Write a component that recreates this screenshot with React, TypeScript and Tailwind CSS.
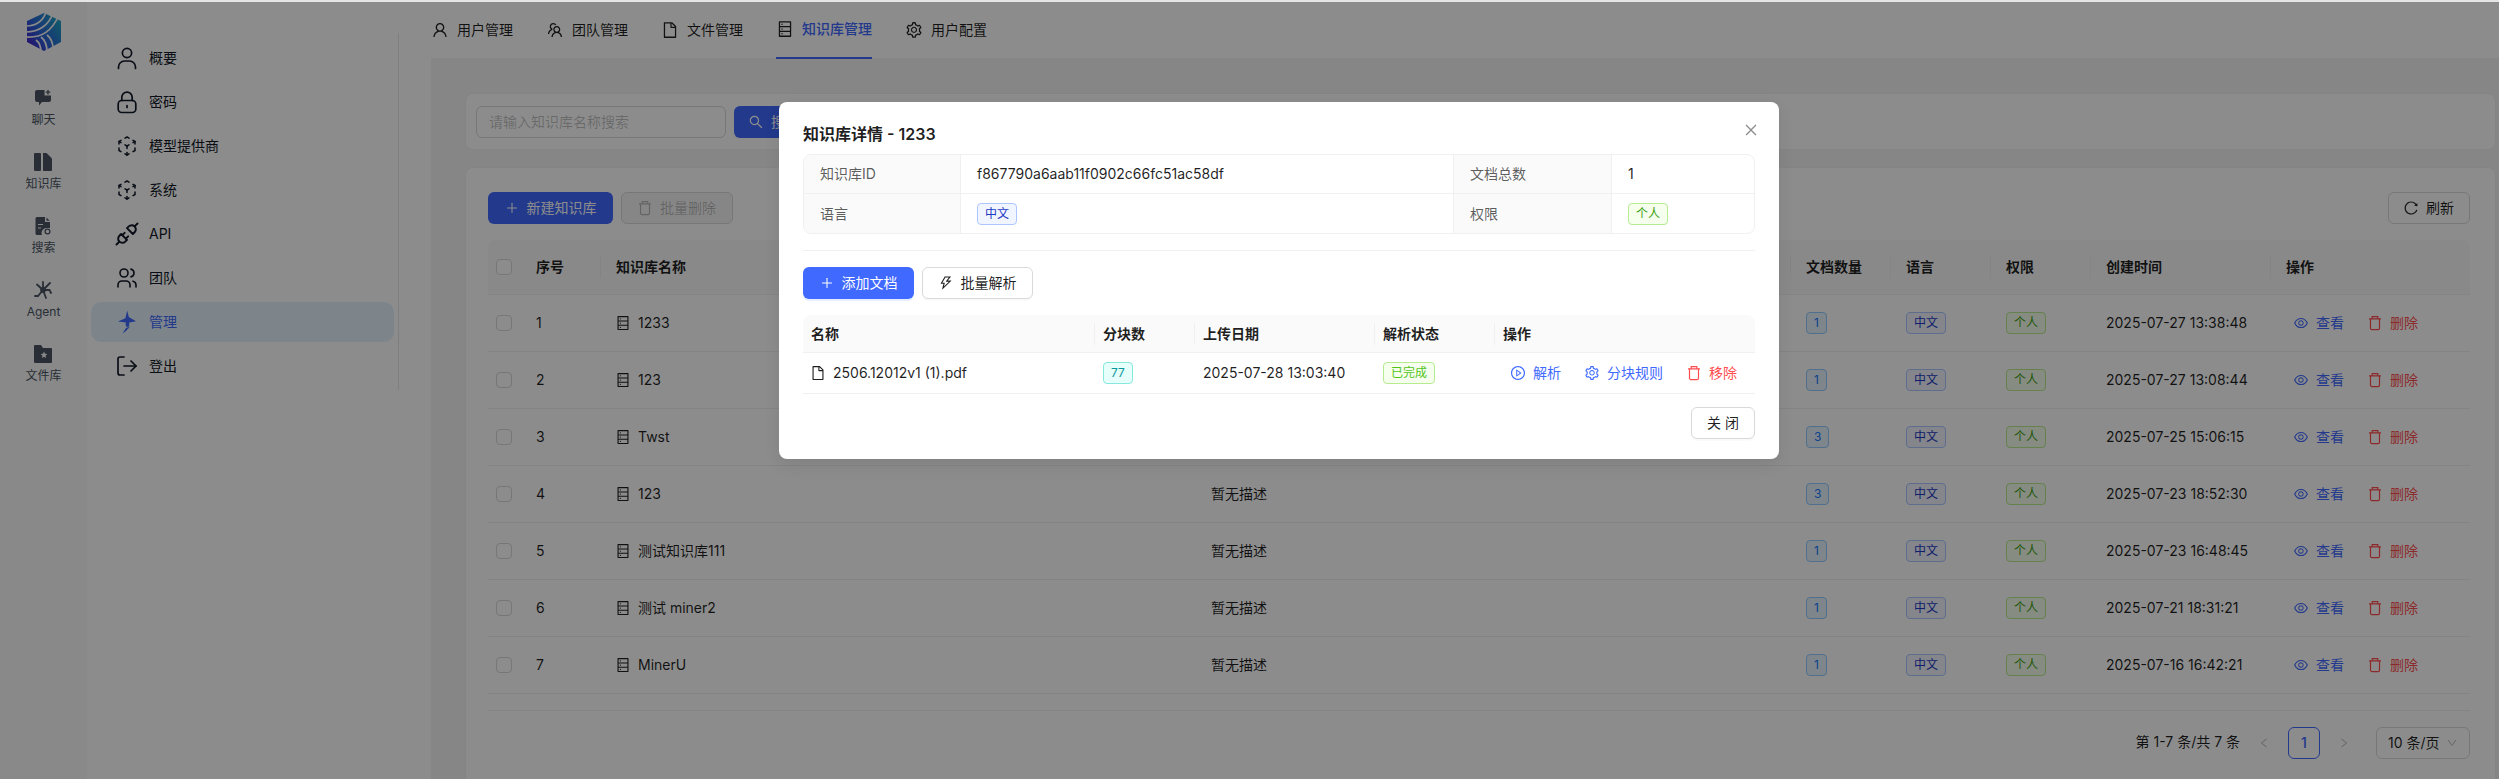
import { LogOut } from 'lucide-react'
import {
  AiOutlineUser,
  AiOutlineTeam,
  AiOutlineFile,
  AiOutlineDatabase,
  AiOutlineSetting,
  AiOutlineSearch,
  AiOutlinePlus,
  AiOutlineThunderbolt,
  AiOutlinePlayCircle,
  AiOutlineClose,
  AiOutlineReload,
  AiOutlineEye,
  AiOutlineLeft,
  AiOutlineRight,
  AiOutlineDown,
} from 'react-icons/ai'
import { TbCube3dSphere, TbPlugConnected, TbUsers } from 'react-icons/tb'

const rows = [
  { name: '1233', docs: 1, created: '2025-07-27 13:38:48' },
  { name: '123', docs: 1, created: '2025-07-27 13:08:44' },
  { name: 'Twst', docs: 3, created: '2025-07-25 15:06:15' },
  { name: '123', docs: 3, created: '2025-07-23 18:52:30' },
  { name: '测试知识库111', docs: 1, created: '2025-07-23 16:48:45' },
  { name: '测试 miner2', docs: 1, created: '2025-07-21 18:31:21' },
  { name: 'MinerU', docs: 1, created: '2025-07-16 16:42:21' },
]

const tabs = [
  { label: '用户管理', Icon: AiOutlineUser },
  { label: '团队管理', Icon: AiOutlineTeam },
  { label: '文件管理', Icon: AiOutlineFile },
  { label: '知识库管理', Icon: AiOutlineDatabase, active: true },
  { label: '用户配置', Icon: AiOutlineSetting },
]

const tableColumns = 'grid grid-cols-[32px_80px_595px_595px_100px_100px_100px_180px_200px]'
const docColumns = 'grid grid-cols-[291px_100px_180px_120px_261px]'
// antd glyphs sit inset in their box, so they get 16px inside a 14px slot
const iconSize = '-mx-px h-4 w-4'

function Logo() {
  return (
    <svg viewBox="0 0 36 40" className="h-10 w-9">
      <defs>
        <linearGradient id="logo-fill" x1="0" y1="1" x2="1" y2="0.2">
          <stop offset="0" stopColor="#4a12c4" />
          <stop offset="0.45" stopColor="#2c5fd8" />
          <stop offset="1" stopColor="#1fa6c4" />
        </linearGradient>
      </defs>
      <path d="M18 1 L35 9 V30 L18 39 L1 30 V9 Z" fill="url(#logo-fill)" />
      <g fill="none" stroke="#f9fafb" strokeWidth="1.7">
        <path d="M0 14 C10 14 17 9 20 0" />
        <path d="M0 20 C13 20 23 13 27 1" />
        <path d="M0 25 C16 26 26 19 33 3" />
        <path d="M10 28 C14 31 15 35 15 40" />
        <path d="M15 25 C19 28 21 33 21 40" />
        <path d="M21 23 C25 26 27 31 27 37" />
      </g>
    </svg>
  )
}

function TrashIcon({ className }: { className?: string }) {
  return (
    <svg viewBox="0 0 16 16" fill="none" stroke="currentColor" strokeWidth="1.2" className={className}>
      <path d="M2 3.8h12M3.5 3.8v9.4A1.4 1.4 0 0 0 4.9 14.6h6.2a1.4 1.4 0 0 0 1.4-1.4V3.8M5.2 3.8V1.6h5.6v2.2" />
    </svg>
  )
}

function ChatIcon() {
  return (
    <svg viewBox="0 0 18 18" className="h-[18px] w-[18px]" fill="currentColor">
      <path d="M3 1h7.5v5.5H17V11a2 2 0 0 1-2 2H8l-3 3.5V13H3a2 2 0 0 1-2-2V3a2 2 0 0 1 2-2z" />
      <path d="M14 1v4.5M11.8 3.2h4.4" stroke="currentColor" strokeWidth="1.3" fill="none" />
    </svg>
  )
}

function BooksIcon() {
  return (
    <svg viewBox="0 0 18 18" className="h-[18px] w-[18px]" fill="currentColor">
      <rect x="0" y="0" width="7" height="18" rx="1" />
      <path d="M9 0h3.5L18 5.5V17a1 1 0 0 1-1 1H9z" />
    </svg>
  )
}

function DocSearchIcon() {
  return (
    <svg viewBox="0 0 18 18" className="h-[18px] w-[18px]" fill="currentColor">
      <path d="M3 0h8v5h5v6h-4a5 5 0 0 0-4 7H3a1.5 1.5 0 0 1-1.5-1.5v-15A1.5 1.5 0 0 1 3 0z" />
      <path d="M12.5 0.5 15.7 3.8h-3.2z" />
      <path d="M4 7.5h5M4 11h3" stroke="#f9fafb" strokeWidth="1.2" />
      <circle cx="13.5" cy="14.5" r="2.4" fill="none" stroke="currentColor" strokeWidth="1.3" />
    </svg>
  )
}

function AgentIcon() {
  return (
    <svg viewBox="0 0 18 18" className="h-[18px] w-[18px]" fill="none" stroke="currentColor" strokeWidth="1.8" strokeLinecap="round">
      <path d="M9 9 3 3.5M9 1v8M9 9l7-7M9 9h6.5l1.5 3M9 9l-5 6H1M9 9l3 8" />
      <circle cx="9" cy="9" r="2" fill="currentColor" />
    </svg>
  )
}

function FolderStarIcon() {
  return (
    <svg viewBox="0 0 18 18" className="h-[18px] w-[18px]" fill="currentColor">
      <path d="M1 0h6l2 3h8a1 1 0 0 1 1 1v13a1 1 0 0 1-1 1H1a1 1 0 0 1-1-1V1a1 1 0 0 1 1-1z" />
      <path d="m10 6.5 1 2.2 2.4.3-1.8 1.6.5 2.4-2.1-1.2-2.1 1.2.5-2.4L6.6 9l2.4-.3z" fill="#f9fafb" />
    </svg>
  )
}

function PersonIcon() {
  return (
    <svg viewBox="0 0 24 24" className="h-6 w-6" fill="none" stroke="currentColor" strokeWidth="1.7" strokeLinecap="round">
      <circle cx="12" cy="7" r="4.6" />
      <path d="M3.5 22.5v-1.5a6 6 0 0 1 6-6h5a6 6 0 0 1 6 6v1.5" />
    </svg>
  )
}

function LockIcon() {
  return (
    <svg viewBox="0 0 24 24" className="h-6 w-6" fill="none" stroke="currentColor" strokeWidth="1.7" strokeLinecap="round">
      <rect x="3.2" y="10.5" width="17.6" height="12" rx="3.5" />
      <path d="M6.8 10.5V7.4a5.2 5.2 0 0 1 10.4 0v3.1M12 15.6v1.8" />
    </svg>
  )
}

function ManageIcon() {
  return (
    <svg viewBox="0 0 24 24" className="h-6 w-6" fill="#3f69ff">
      <path d="M12.2 0.5 13.8 7 21 11.2 14.3 12.6 14 16.5 11.5 17 10.5 14.5 11 12.6 3 11.4 10.4 8.3z" />
      <path d="M11 18 15 16.5 11 21 7.5 23.5z" />
    </svg>
  )
}

function Tag({ color, children }: { color: string; children: React.ReactNode }) {
  return (
    <span className={`inline-flex h-[22px] items-center rounded border px-[7px] text-xs leading-5 ${color}`}>
      {children}
    </span>
  )
}

const blueTag = 'border-[#91caff] bg-[#e6f4ff] text-[#1677ff]'
const indigoTag = 'border-[#adc6ff] bg-[#f0f5ff] text-[#1d39c4]'
const greenTag = 'border-[#b7eb8f] bg-[#f6ffed] text-[#389e0d]'
const successTag = 'border-[#b7eb8f] bg-[#f6ffed] text-[#52c41a]'
const cyanTag = 'border-[#87e8de] bg-[#e6fffb] text-[#08979c]'

function HeaderCell({ children, pad = 'pl-[15px]' }: { children: React.ReactNode; pad?: string }) {
  return (
    <div className="flex items-center">
      <div className={`h-[22px] w-full border-l border-[#f0f0f0] text-sm leading-[22px] font-semibold text-[#000000e0] ${pad}`}>
        {children}
      </div>
    </div>
  )
}

function Sidebar() {
  const railItems = [
    { label: '聊天', icon: <ChatIcon /> },
    { label: '知识库', icon: <BooksIcon /> },
    { label: '搜索', icon: <DocSearchIcon /> },
    { label: 'Agent', icon: <AgentIcon /> },
    { label: '文件库', icon: <FolderStarIcon /> },
  ]
  const menu = [
    { label: '概要', icon: <PersonIcon /> },
    { label: '密码', icon: <LockIcon /> },
    { label: '模型提供商', icon: <TbCube3dSphere className="h-6 w-6" strokeWidth={1.5} /> },
    { label: '系统', icon: <TbCube3dSphere className="h-6 w-6" strokeWidth={1.5} /> },
    { label: 'API', icon: <TbPlugConnected className="-mx-0.5 h-7 w-7" strokeWidth={1.7} /> },
    { label: '团队', icon: <TbUsers className="h-6 w-6" strokeWidth={1.6} /> },
    { label: '管理', icon: <ManageIcon />, active: true },
    { label: '登出', icon: <LogOut className="h-6 w-6" strokeWidth={1.7} /> },
  ]
  return (
    <>
      <aside className="flex w-[87px] shrink-0 flex-col items-center bg-[#f9fafb] pt-3">
        <Logo />
        <div className="mt-[37px] flex flex-col">
          {railItems.map((item) => (
            <div key={item.label} className="flex h-16 flex-col items-center text-[#4b5563]">
              {item.icon}
              <span className="mt-[5px] text-xs leading-4">{item.label}</span>
            </div>
          ))}
        </div>
      </aside>
      <nav className="w-[344px] shrink-0 bg-white pt-[33px]">
        <div className="flex h-[357px] w-[312px] flex-col gap-1 border-r border-[#e5e7eb] pt-[5px] pl-1">
          {menu.map((item) => (
            <div
              key={item.label}
              className={`flex h-10 w-[303px] shrink-0 items-center gap-[10px] rounded-[10px] pl-6 text-sm ${
                item.active ? 'bg-[#e3f2fd] text-[#3f69ff]' : 'text-[#111827]'
              }`}
            >
              {item.icon}
              <span>{item.label}</span>
            </div>
          ))}
        </div>
      </nav>
    </>
  )
}

function KnowledgeTable() {
  return (
    <section className="h-[640px] rounded-lg border border-[#f0f0f0] bg-white pt-6 pl-[22px]">
      <div className="flex w-[1982px] justify-between">
        <div className="flex gap-2">
          <button className="flex h-8 w-[125px] items-center justify-center gap-2 rounded-md bg-[#3f69ff] text-sm text-white">
            <AiOutlinePlus className="h-[14px] w-[14px]" />
            新建知识库
          </button>
          <button className="flex h-8 w-[112px] items-center justify-center gap-2 rounded-md border border-[#d9d9d9] bg-[#0000000a] text-sm text-[#00000040]">
            <TrashIcon className={iconSize} />
            批量删除
          </button>
        </div>
        <button className="flex h-8 w-[82px] items-center justify-center gap-2 rounded-md border border-[#d9d9d9] text-sm text-[#000000e0]">
          <AiOutlineReload className={iconSize} />
          刷新
        </button>
      </div>
      <div className="mt-4 w-[1982px]">
        <div className={`${tableColumns} h-[55px] rounded-t-lg border-b border-[#f0f0f0] bg-[#fafafa]`}>
          <div className="flex items-center pl-2">
            <span className="h-4 w-4 rounded border border-[#d9d9d9] bg-white" />
          </div>
          <div className="flex items-center pl-4 text-sm font-semibold text-[#000000e0]">序号</div>
          <HeaderCell>知识库名称</HeaderCell>
          <HeaderCell>描述</HeaderCell>
          <HeaderCell>文档数量</HeaderCell>
          <HeaderCell>语言</HeaderCell>
          <HeaderCell>权限</HeaderCell>
          <HeaderCell>创建时间</HeaderCell>
          <HeaderCell>操作</HeaderCell>
        </div>
        {rows.map((row, i) => (
          <div key={i} className={`${tableColumns} h-[57px] items-center border-b border-[#f0f0f0] text-sm text-[#000000e0]`}>
            <div className="pl-2">
              <span className="block h-4 w-4 rounded border border-[#d9d9d9] bg-white" />
            </div>
            <div className="pl-4">{i + 1}</div>
            <div className="flex items-center gap-2 pl-4">
              <AiOutlineDatabase className={iconSize} />
              {row.name}
            </div>
            <div className="pl-4">暂无描述</div>
            <div className="pl-4">
              <Tag color={blueTag}>{row.docs}</Tag>
            </div>
            <div className="pl-4">
              <Tag color={indigoTag}>中文</Tag>
            </div>
            <div className="pl-4">
              <Tag color={greenTag}>个人</Tag>
            </div>
            <div className="pl-4">{row.created}</div>
            <div className="flex gap-2 pl-4">
              <span className="flex items-center gap-2 px-2 text-[#3f69ff]">
                <AiOutlineEye className={iconSize} />
                查看
              </span>
              <span className="flex items-center gap-2 px-2 text-[#ff4d4f]">
                <TrashIcon className={iconSize} />
                删除
              </span>
            </div>
          </div>
        ))}
        <div className="h-[17px] border-b border-[#f0f0f0]" />
        <div className="mt-[16px] flex items-center justify-end gap-2 text-sm text-[#000000e0]">
          <span className="mb-[2px]">第 1-7 条/共 7 条</span>
          <span className="flex h-8 w-8 items-center justify-center text-[#00000040]">
            <AiOutlineLeft className="h-3 w-3" />
          </span>
          <span className="flex h-8 w-8 items-center justify-center rounded-md border border-[#3f69ff] font-medium text-[#3f69ff]">
            1
          </span>
          <span className="flex h-8 w-8 items-center justify-center text-[#00000040]">
            <AiOutlineRight className="h-3 w-3" />
          </span>
          <span className="ml-2 flex h-8 w-[94px] items-center justify-between rounded-md border border-[#d9d9d9] pr-[11px] pl-[11px]">
            10 条/页
            <AiOutlineDown className="h-3 w-3 text-[#00000040]" />
          </span>
        </div>
      </div>
    </section>
  )
}

function DetailModal() {
  const labelCell = 'flex items-center bg-[#fafafa] pl-4 text-sm text-[#000000a6] border-r border-[#f0f0f0]'
  const valueCell = 'flex items-center pl-4 text-sm text-[#000000e0]'
  return (
    <div className="absolute top-[102px] left-[779px] w-[1000px] rounded-lg bg-white px-6 pt-5 pb-5 shadow-[0_6px_16px_rgba(0,0,0,0.08)]">
      <button className="absolute top-[20px] right-[20px] text-[#00000073]">
        <AiOutlineClose className="h-4 w-4" />
      </button>
      <h2 className="text-base leading-6 font-semibold text-[#000000e0]">知识库详情 - 1233</h2>
      <div className="mt-2 rounded-lg border border-[#f0f0f0]">
        <div className="grid h-[39px] grid-cols-[157px_493px_158px_142px] border-b border-[#f0f0f0]">
          <div className={`${labelCell} rounded-tl-lg`}>知识库ID</div>
          <div className={`${valueCell} border-r border-[#f0f0f0]`}>f867790a6aab11f0902c66fc51ac58df</div>
          <div className={labelCell}>文档总数</div>
          <div className={valueCell}>1</div>
        </div>
        <div className="grid h-[39px] grid-cols-[157px_493px_158px_142px]">
          <div className={`${labelCell} rounded-bl-lg`}>语言</div>
          <div className={`${valueCell} border-r border-[#f0f0f0]`}>
            <Tag color={indigoTag}>中文</Tag>
          </div>
          <div className={labelCell}>权限</div>
          <div className={valueCell}>
            <Tag color={greenTag}>个人</Tag>
          </div>
        </div>
      </div>
      <div className="my-4 h-px bg-[#f0f0f0]" />
      <div className="flex gap-2">
        <button className="flex h-8 w-[111px] items-center justify-center gap-2 rounded-md bg-[#3f69ff] text-sm text-white shadow-[0_2px_0_rgba(5,95,255,0.1)]">
          <AiOutlinePlus className="h-[14px] w-[14px]" />
          添加文档
        </button>
        <button className="flex h-8 w-[111px] items-center justify-center gap-2 rounded-md border border-[#d9d9d9] bg-white text-sm text-[#000000e0] shadow-[0_2px_0_rgba(0,0,0,0.02)]">
          <AiOutlineThunderbolt className={iconSize} />
          批量解析
        </button>
      </div>
      <div className="mt-4">
        <div className={`${docColumns} h-[38px] rounded-t-lg border-b border-[#f0f0f0] bg-[#fafafa]`}>
          <div className="flex items-center pl-2 text-sm font-semibold text-[#000000e0]">名称</div>
          <HeaderCell pad="pl-2">分块数</HeaderCell>
          <HeaderCell pad="pl-2">上传日期</HeaderCell>
          <HeaderCell pad="pl-2">解析状态</HeaderCell>
          <HeaderCell pad="pl-2">操作</HeaderCell>
        </div>
        <div className={`${docColumns} h-[41px] items-center border-b border-[#f0f0f0] text-sm text-[#000000e0]`}>
          <div className="flex items-center gap-2 pl-2">
            <AiOutlineFile className={iconSize} />
            2506.12012v1 (1).pdf
          </div>
          <div className="pl-[9px]">
            <Tag color={cyanTag}>77</Tag>
          </div>
          <div className="pl-[9px]">2025-07-28 13:03:40</div>
          <div className="pl-[9px]">
            <Tag color={successTag}>已完成</Tag>
          </div>
          <div className="flex gap-2 pl-[9px]">
            <span className="flex items-center gap-2 px-2 text-[#3f69ff]">
              <AiOutlinePlayCircle className={iconSize} />
              解析
            </span>
            <span className="flex items-center gap-2 px-2 text-[#3f69ff]">
              <AiOutlineSetting className={iconSize} />
              分块规则
            </span>
            <span className="flex items-center gap-2 px-2 text-[#ff4d4f]">
              <TrashIcon className={iconSize} />
              移除
            </span>
          </div>
        </div>
      </div>
      <div className="mt-[13px] flex justify-end">
        <button className="h-8 w-16 rounded-md border border-[#d9d9d9] bg-white text-sm text-[#000000e0] shadow-[0_2px_0_rgba(0,0,0,0.02)]">
          关 闭
        </button>
      </div>
    </div>
  )
}

export default function App() {
  return (
    <div className="relative flex h-[779px] w-[2499px] overflow-hidden bg-white [font-family:Inter,'Noto_Sans_CJK_SC',sans-serif]">
      <Sidebar />
      <main className="min-w-0 flex-1">
        <div className="flex h-[58px] gap-[33px] bg-white">
          {tabs.map(({ label, Icon, active }) => (
            <div
              key={label}
              className={`flex h-[59px] items-center gap-2 text-sm ${
                active ? 'border-b-2 border-[#3f69ff] font-medium text-[#3f69ff]' : 'text-[#000000e0]'
              }`}
            >
              <Icon className={`h-[18px] w-[18px] ${active ? 'text-[#000000e0]' : ''}`} />
              {label}
            </div>
          ))}
        </div>
        <div className="h-[721px] bg-[#f5f5f5] pt-[35px] pr-[3px] pl-[34px]">
          <section className="flex h-[57px] gap-2 rounded-lg border border-[#f0f0f0] bg-white pt-3 pl-[10px]">
            <div className="flex h-8 w-[250px] items-center rounded-md border border-[#d9d9d9] pl-3 text-sm text-[#00000040]">
              请输入知识库名称搜索
            </div>
            <button className="flex h-8 w-20 items-center justify-center gap-2 rounded-md bg-[#3f69ff] text-sm text-white">
              <AiOutlineSearch className={iconSize} />
              搜索
            </button>
          </section>
          <div className="h-[17px]" />
          <KnowledgeTable />
        </div>
      </main>
      <div className="absolute inset-0 top-[2px] bg-[#00000073]" />
      <div className="absolute inset-x-0 top-0 h-[2px] bg-[#e5e5e5]" />
      <DetailModal />
    </div>
  )
}
